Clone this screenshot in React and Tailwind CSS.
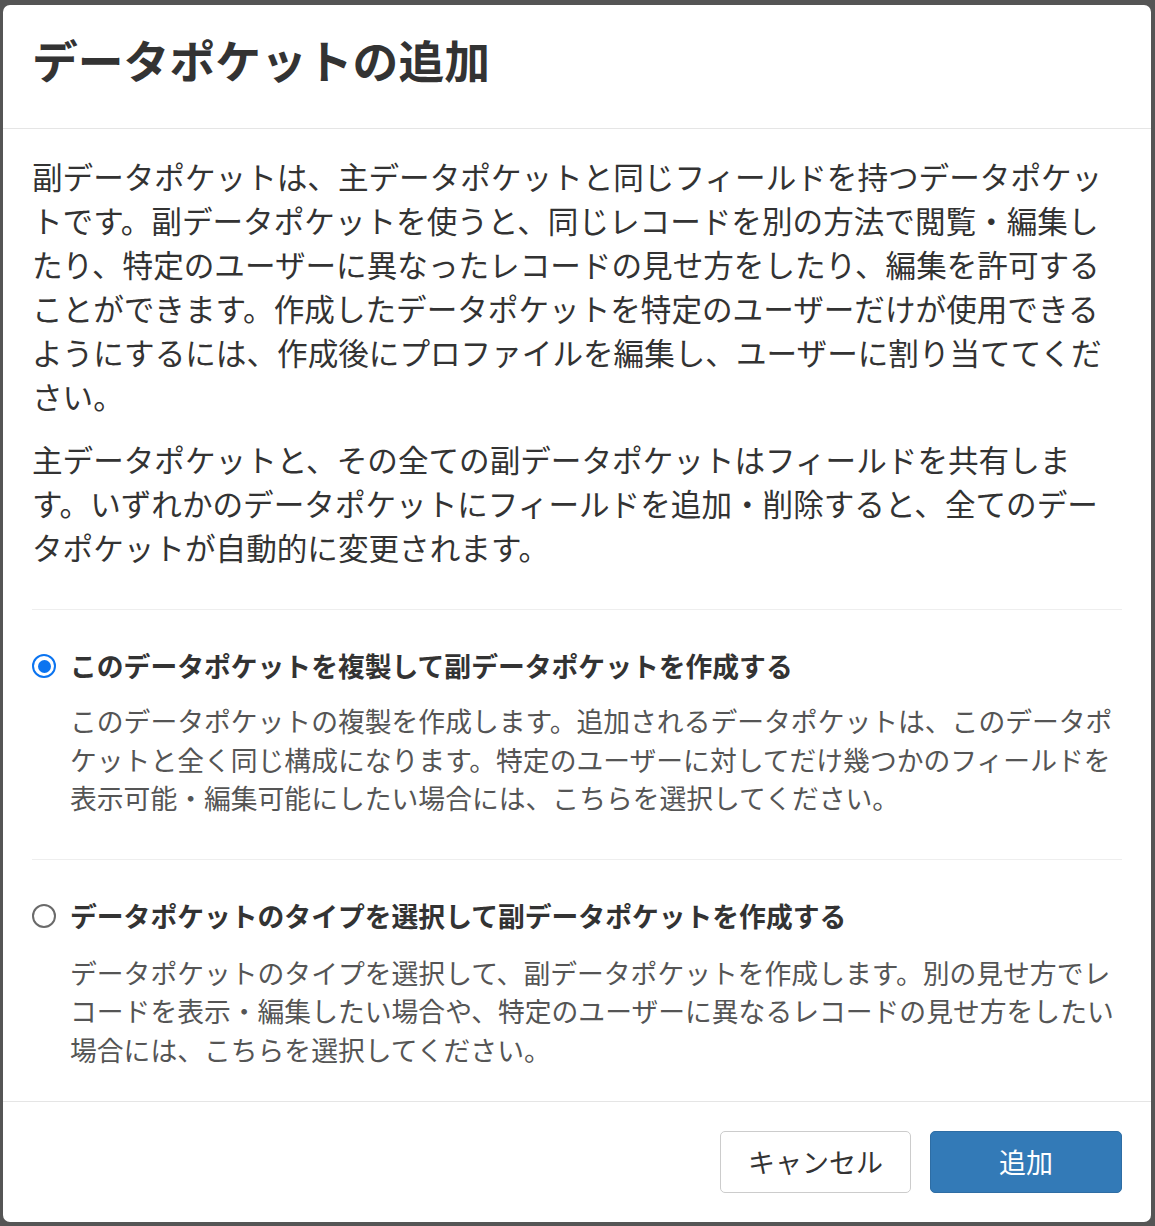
import React from "react";

const font = { fontFamily: '"Noto Sans CJK JP", "Noto Sans", sans-serif' };

function Radio({ checked }) {
  if (checked) {
    return (
      <div className="w-[24px] h-[24px] shrink-0 rounded-full border-[2.5px] border-[#0b74f0] flex items-center justify-center bg-white">
        <div className="w-[13px] h-[13px] rounded-full bg-[#0b74f0]" />
      </div>
    );
  }
  return <div className="w-[24px] h-[24px] shrink-0 rounded-full border-[2px] border-[#6a6a6a] bg-white" />;
}

function Option({ checked, label, desc, first }) {
  return (
    <div className={first ? "pt-[37px] pb-[41px] border-b border-[#eeeeee]" : "pt-[37px]"}>
      <div className="flex items-center gap-[14px]">
        <Radio checked={checked} />
        <div className="text-[26.8px] leading-[38px] font-bold text-[#333333]">{label}</div>
      </div>
      <p className={first ? "mt-[17px] pl-[38px] text-[26.8px] leading-[38.5px] text-[#555555]" : "mt-[19px] pl-[38px] text-[26.8px] leading-[38.5px] text-[#555555]"}>{desc}</p>
    </div>
  );
}

export default function App() {
  return (
    <div className="w-full h-[1226px] bg-[#555555] pt-[5px] pl-[3px] pr-[4px] pb-[4px]" style={font}>
      <div className="h-full bg-white rounded-[7px] flex flex-col overflow-hidden">
        <div className="h-[124px] shrink-0 border-b border-[#e5e5e5] px-[29px] flex items-center pb-[14px]">
          <h1 className="text-[45.8px] font-bold text-[#333333] leading-none">データポケットの追加</h1>
        </div>
        <div className="flex-1 px-[29px] pt-[25px]">
          <p className="text-[30.6px] leading-[44px] text-[#333333] mb-[19px]">
            副データポケットは、主データポケットと同じフィールドを持つデータポケットです。副データポケットを使うと、同じレコードを別の方法で閲覧・編集したり、特定のユーザーに異なったレコードの見せ方をしたり、編集を許可することができます。作成したデータポケットを特定のユーザーだけが使用できるようにするには、作成後にプロファイルを編集し、ユーザーに割り当ててください。
          </p>
          <p className="text-[30.6px] leading-[44px] text-[#333333] pb-[40px] border-b border-[#eeeeee]">
            主データポケットと、その全ての副データポケットはフィールドを共有します。いずれかのデータポケットにフィールドを追加・削除すると、全てのデータポケットが自動的に変更されます。
          </p>
          <Option
            first
            checked
            label="このデータポケットを複製して副データポケットを作成する"
            desc="このデータポケットの複製を作成します。追加されるデータポケットは、このデータポケットと全く同じ構成になります。特定のユーザーに対してだけ幾つかのフィールドを表示可能・編集可能にしたい場合には、こちらを選択してください。"
          />
          <Option
            checked={false}
            label="データポケットのタイプを選択して副データポケットを作成する"
            desc="データポケットのタイプを選択して、副データポケットを作成します。別の見せ方でレコードを表示・編集したい場合や、特定のユーザーに異なるレコードの見せ方をしたい場合には、こちらを選択してください。"
          />
        </div>
        <div className="h-[121px] shrink-0 border-t border-[#e5e5e5] px-[29px] flex items-center justify-end gap-[19px]">
          <button className="w-[191px] h-[62px] rounded-[5px] border border-[#cccccc] bg-white text-[27px] text-[#333333]">
            キャンセル
          </button>
          <button className="w-[192px] h-[62px] rounded-[5px] border border-[#2e6da4] bg-[#337ab7] text-[27px] text-white">
            追加
          </button>
        </div>
      </div>
    </div>
  );
}
